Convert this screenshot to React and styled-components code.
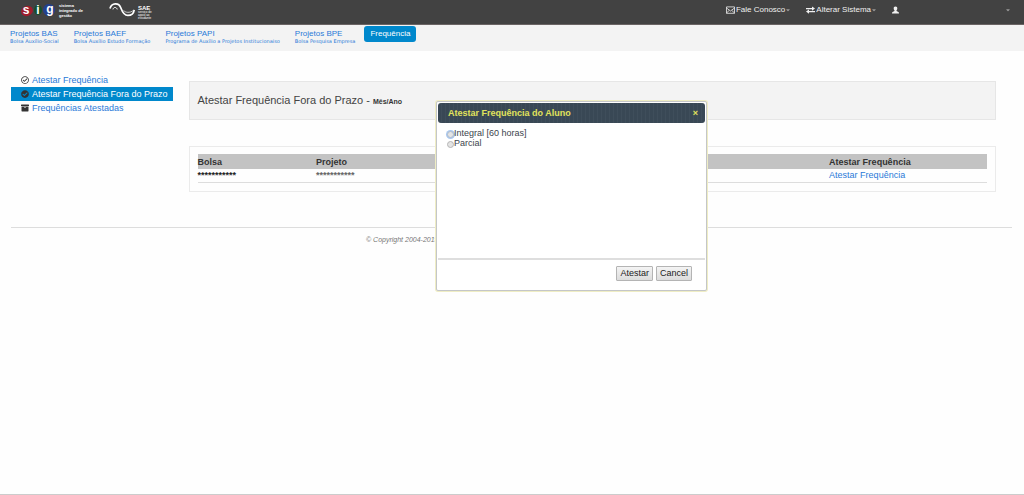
import React, { useState } from 'react';
import styled, { createGlobalStyle } from 'styled-components';
import {
	FaArchive,
	FaCaretDown,
	FaCheckCircle,
	FaRegCheckCircle,
} from 'react-icons/fa';

const GlobalStyle = createGlobalStyle`
	* {
		box-sizing: border-box;
	}

	body {
		background: #fefefe;
		color: #444;
		font-family: 'Liberation Sans', Arial, sans-serif;
		font-size: 9px;
		line-height: 14px;
		margin: 0;
	}

	a {
		color: #2a7ad8;
		text-decoration: none;
	}
`;

const Page = styled.div`
	border-bottom: 1px solid #ccc;
	min-height: 100vh;
`;

const TopBar = styled.header`
	align-items: flex-start;
	background: #424242;
	border-bottom: 1px solid #6a6464;
	display: flex;
	height: 25px;
	justify-content: space-between;
	padding: 3px 14px 0 20px;
`;

const Logos = styled.div`
	display: flex;
	gap: 26px;
`;

const Logo = styled.a`
	color: #fff;
	display: flex;
	gap: 3px;
`;

const LogoText = styled.span`
	display: block;
	font-size: 4px;
	font-weight: bold;
	line-height: 5px;
`;

const SaeText = styled.span`
	display: block;
	font-size: 3px;
	line-height: 3px;
	padding-top: 2px;

	strong {
		display: block;
		font-size: 6px;
		line-height: 6px;
	}
`;

const TopMenu = styled.nav`
	display: flex;
	gap: 16px;
`;

const TopButton = styled.button`
	align-items: center;
	background: none;
	border: 0;
	color: #f0f0f0;
	display: flex;
	font: inherit;
	font-size: 8px;
	gap: 1px;
	height: 14px;
	padding: 0;
`;

const Caret = styled(FaCaretDown)`
	color: #999;
	height: 6px;
	width: 4px;
`;

const UserButton = styled(TopButton)`
	gap: 107px;
`;

const ProjectNav = styled.nav`
	align-items: flex-start;
	background: #f3f3f3;
	display: flex;
	height: 26px;
	padding: 1px 10px 0;
`;

const ProjectLinks = styled.div`
	display: flex;
	gap: 15px;
	padding-right: 9px;
`;

const ProjectLink = styled.a`
	font-size: 8px;
	line-height: 8px;
	padding-top: 4px;

	small {
		display: block;
		font-family: 'DejaVu Sans', Verdana, sans-serif;
		font-size: 5px;
		line-height: 6px;
	}
`;

const ActiveTab = styled.a`
	&& {
		background: #0088cc;
		border-radius: 3px;
		color: #fff;
		font-size: 8px;
		line-height: 16px;
		padding: 0 6px;
	}
`;

const Body = styled.div`
	display: grid;
	gap: 16px;
	grid-template-columns: minmax(0, 1fr) minmax(0, 5fr);
	padding: 22px 28px 35px 11px;
`;

const SideMenu = styled.ul`
	list-style: none;
	margin: 0;
	padding: 0;
`;

const SideLink = styled.a`
	&& {
		align-items: center;
		background: ${({ $active }) => ($active ? '#0088cc' : 'none')};
		color: ${({ $active }) => ($active ? '#fff' : '#2a7ad8')};
		display: flex;
		gap: 3px;
		height: 14px;
		padding-left: 10px;
		white-space: nowrap;
	}

	svg {
		color: #333;
		height: 8px;
		width: 8px;
	}
`;

const Main = styled.main`
	display: grid;
	gap: 26px;
	padding-top: 8px;
`;

const Heading = styled.h1`
	background: #f3f3f3;
	border: 1px solid #e6e6e6;
	font-size: 11px;
	font-weight: normal;
	line-height: 37px;
	margin: 0;
	padding: 0 8px;

	strong {
		color: #333;
		font-size: 7px;
		line-height: 9px;
	}
`;

const Panel = styled.section`
	border: 1px solid #ebebeb;
	padding: 7px 8px 8px;
`;

const Table = styled.table`
	border-collapse: collapse;
	line-height: 12px;
	table-layout: fixed;
	width: 100%;

	th {
		background: #c3c3c3;
		color: #333;
		height: 15px;
		padding: 0;
		text-align: left;
	}

	td {
		border-bottom: 1px solid #ddd;
		height: 13px;
		padding: 0;
	}

	th:first-child {
		width: 15%;
	}

	th:last-child {
		width: 20%;
	}
`;

const Masked = styled.span`
	color: ${({ $strong }) => ($strong ? '#222' : '#666')};
	font-weight: bold;
`;

const Footer = styled.footer`
	border-top: 1px solid #ddd;
	color: #777;
	font-size: 7px;
	font-style: italic;
	margin: 0 12px 0 11px;
	padding: 5px 0 5px 355px;
`;

const Dialog = styled.form`
	background: #fff;
	border: 1px solid #c4c6c8;
	border-radius: 2px;
	box-shadow: 0 0 0 1px #efedc4;
	left: 436px;
	padding: 1px;
	position: absolute;
	top: 101px;
	width: 271px;
`;

const DialogTitle = styled.div`
	align-items: center;
	background: #394855;
	background-image: repeating-linear-gradient(90deg, transparent 0 3px, #3f4e5b 3px 4px);
	border-radius: 3px;
	color: #e1e35c;
	display: flex;
	height: 20px;
	justify-content: space-between;
	padding: 0 7px 0 10px;

	h2 {
		font-size: 9px;
		line-height: 12px;
		margin: 0;
	}
`;

const CloseButton = styled.button`
	background: none;
	border: 0;
	color: inherit;
	font: inherit;
	font-weight: bold;
	line-height: 12px;
	padding: 0;
`;

const Options = styled.div`
	height: 135px;
	padding: 5px 9px;
`;

const Option = styled.label`
	align-items: center;
	color: #3c444c;
	display: flex;
	height: 10px;

	input {
		appearance: none;
		background: #e4e4e4;
		border: 1px solid #b5b5b5;
		border-radius: 50%;
		height: 7px;
		margin: 3px 0 0;
		width: 7px;
	}

	input:checked {
		background: #8a8f96;
	}

	&:first-child input {
		border-color: #b0bccb;
		box-shadow: 0 0 0 1px #a9c8f0;
	}
`;

const Actions = styled.div`
	border-top: 2px solid #dedede;
	display: flex;
	gap: 3px;
	justify-content: flex-end;
	padding: 6px 13px 8px;
`;

const ActionButton = styled.button`
	background: linear-gradient(#f4f4f4, #dcdcdc);
	border: 1px solid #b4b4b4;
	border-radius: 1px;
	color: #222;
	font: inherit;
	height: 15px;
	line-height: 13px;
	padding: 0 3px;
`;

const SigMark = () => (
	<svg width="36" height="16" viewBox="0 0 36 16">
		<ellipse cx="7" cy="8" rx="6" ry="5" fill="#a01c2c" transform="rotate(-20 7 8)" />
		<ellipse cx="18" cy="7" rx="4" ry="5" fill="#14502f" />
		<ellipse cx="29" cy="7" rx="6" ry="6" fill="#24408c" transform="rotate(-20 29 7)" />
		<g fill="#fff" fontFamily="'Liberation Sans', Arial, sans-serif" fontSize="12" fontWeight="bold" textAnchor="middle">
			<text x="6" y="11">s</text>
			<text x="18" y="11">i</text>
			<text x="30" y="10">g</text>
		</g>
	</svg>
);

const SaeMark = () => (
	<svg width="26" height="14" viewBox="0 0 26 14" fill="none" stroke="#fff">
		<path d="M1 5.5C2.6 -.4 9.8 -.6 11.8 4.8C13 8 14.4 12.4 18.8 12.4C22.4 12.4 24.8 10 25.2 6.8" strokeWidth="1.7" />
		<path d="M4 6.4C4.4 3.8 7.6 3.8 8.2 6.4" strokeWidth="1" />
		<path d="M14.6 7.4C16 9.6 21 10.4 24.6 7.2" strokeWidth=".7" />
	</svg>
);

const EnvelopeIcon = () => (
	<svg width="9" height="8" viewBox="0 0 9 8" fill="none" stroke="currentColor">
		<path d="M.5 .9h8v6.4h-8zM.5 2L4.5 5 8.5 2M.5 7L3.2 4.4M8.5 7L5.8 4.4" strokeWidth=".8" />
	</svg>
);

const ExchangeIcon = () => (
	<svg width="9" height="8" viewBox="0 0 9 8" fill="currentColor">
		<path d="M0 2h6V.5L9 2.6 6 4.7V3.2H0zM9 5H3V3.5L0 5.6 3 7.7V6.2h6z" />
	</svg>
);

const UserIcon = () => (
	<svg width="7" height="8" viewBox="0 0 7 8" fill="currentColor">
		<path d="M3.5 .4C4.8 .4 5.4 1.3 5.3 2.5C5.2 3.5 4.8 4 4.5 4.5V5L6.4 5.9C6.8 6.1 7 6.5 7 7.5H0C0 6.5 .2 6.1 .6 5.9L2.5 5V4.5C2.2 4 1.8 3.5 1.7 2.5C1.6 1.3 2.2 .4 3.5 .4z" />
	</svg>
);

const projects = [
	['Projetos BAS', 'Bolsa Auxílio-Social'],
	['Projetos BAEF', 'Bolsa Auxílio Estudo Formação'],
	['Projetos PAPI', 'Programa de Auxílio a Projetos Institucionaiso'],
	['Projetos BPE', 'Bolsa Pesquisa Empresa'],
];

const sideItems = [
	{ label: 'Atestar Frequência', Icon: FaRegCheckCircle },
	{ label: 'Atestar Frequência Fora do Prazo', Icon: FaCheckCircle, active: true },
	{ label: 'Frequências Atestadas', Icon: FaArchive },
];

const options = ['Integral [60 horas]', 'Parcial'];

export default () => {
	const [open, setOpen] = useState(true);
	const [choice, setChoice] = useState('');
	return (
		<Page>
			<GlobalStyle />
			<TopBar>
				<Logos>
					<Logo href="#">
						<SigMark />
						<LogoText>sistema<br />integrado de<br />gestão</LogoText>
					</Logo>
					<Logo href="#">
						<SaeMark />
						<SaeText><strong>SAE</strong>serviço de<br />apoio ao<br />estudante</SaeText>
					</Logo>
				</Logos>
				<TopMenu>
					<TopButton><EnvelopeIcon />Fale Conosco<Caret /></TopButton>
					<TopButton><ExchangeIcon />Alterar Sistema<Caret /></TopButton>
					<UserButton aria-label="Usuário"><UserIcon /><Caret /></UserButton>
				</TopMenu>
			</TopBar>
			<ProjectNav>
				<ProjectLinks>
					{projects.map(([name, description]) => (
						<ProjectLink href="#" key={name}>{name}<small>{description}</small></ProjectLink>
					))}
				</ProjectLinks>
				<ActiveTab href="#">Frequência</ActiveTab>
			</ProjectNav>
			<Body>
				<SideMenu>
					{sideItems.map(({ label, Icon, active }) => (
						<li key={label}>
							<SideLink href="#" $active={active}><Icon />{label}</SideLink>
						</li>
					))}
				</SideMenu>
				<Main>
					<Heading>Atestar Frequência Fora do Prazo - <strong>Mês/Ano</strong></Heading>
					<Panel>
						<Table>
							<thead>
								<tr>
									<th>Bolsa</th>
									<th>Projeto</th>
									<th>Atestar Frequência</th>
								</tr>
							</thead>
							<tbody>
								<tr>
									<td><Masked $strong>***********</Masked></td>
									<td><Masked>***********</Masked></td>
									<td><a href="#" onClick={() => setOpen(true)}>Atestar Frequência</a></td>
								</tr>
							</tbody>
						</Table>
					</Panel>
				</Main>
			</Body>
			<Footer>© Copyright 2004-2019</Footer>
			{open && (
				<Dialog role="dialog" aria-labelledby="dialog-title" onSubmit={(e) => e.preventDefault()}>
					<DialogTitle>
						<h2 id="dialog-title">Atestar Frequência do Aluno</h2>
						<CloseButton type="button" aria-label="Fechar" onClick={() => setOpen(false)}>×</CloseButton>
					</DialogTitle>
					<Options>
						{options.map((option) => (
							<Option key={option}>
								<input type="radio" name="frequencia" checked={choice === option} onChange={() => setChoice(option)} />
								{option}
							</Option>
						))}
					</Options>
					<Actions>
						<ActionButton>Atestar</ActionButton>
						<ActionButton type="button" onClick={() => setOpen(false)}>Cancel</ActionButton>
					</Actions>
				</Dialog>
			)}
		</Page>
	)
}
